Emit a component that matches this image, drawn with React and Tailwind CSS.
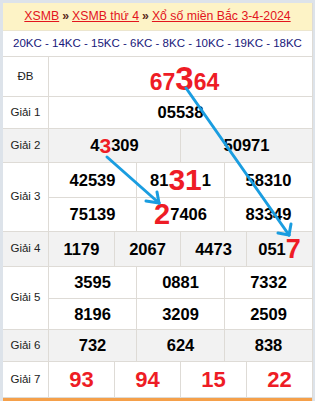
import React from 'react';

const font = { fontFamily: '"Liberation Sans", Arial, sans-serif' };

function Num({ children }) {
  return <span className="text-[16.5px] font-bold text-black leading-none">{children}</span>;
}

function Red({ size, children }) {
  return <span className={`font-bold text-[#ee1c25] leading-none ${size}`}>{children}</span>;
}

function Cell({ children, last, className = '' }) {
  return (
    <div className={`flex-1 flex items-center justify-center ${last ? '' : 'border-r border-[#dedbd6]'} ${className}`}>
      {children}
    </div>
  );
}

function Row({ label, height, bg = 'bg-white', children }) {
  return (
    <div className={`flex border-b border-[#dedbd6] ${bg} ${height}`}>
      <div className="w-[46px] shrink-0 flex items-center justify-center border-r border-[#dedbd6] text-[11.5px] text-[#222]">
        {label}
      </div>
      <div className="flex-1 flex flex-col">{children}</div>
    </div>
  );
}

export default function App() {
  return (
    <div className="relative w-[315px] h-[401px] overflow-hidden bg-[#dde3ea] pt-[3px] pl-[3px] pr-[2px]" style={font}>
      <div className="bg-white border-r border-[#dedbd6] h-full flex flex-col">
        {/* Header */}
        <div className="h-[28px] bg-[#fdf3c6] flex items-center justify-center text-[12.3px] border-b border-[#ece6cf]">
          <a className="text-[#e3141d] underline">XSMB</a>
          <span className="mx-[3px] text-[#5a2a1a] font-bold">»</span>
          <a className="text-[#e3141d] underline">XSMB thứ 4</a>
          <span className="mx-[3px] text-[#5a2a1a] font-bold">»</span>
          <a className="text-[#e3141d] underline">Xổ số miền Bắc 3-4-2024</a>
        </div>
        <div className="h-[26px] flex items-center justify-center text-[11.5px] text-[#17177a] border-b border-[#dedbd6]">
          20KC - 14KC - 15KC - 6KC - 8KC - 10KC - 19KC - 18KC
        </div>

        <Row label="ĐB" height="h-[40px]">
          <div className="flex-1 flex items-center justify-center pl-[8px] pt-[4px]">
            <span className="font-bold text-[#ee1c25] text-[23px] leading-none">
              67<span className="text-[33px]">3</span>64
            </span>
          </div>
        </Row>

        <Row label="Giải 1" height="h-[32px]">
          <Cell last><Num>05538</Num></Cell>
        </Row>

        <Row label="Giải 2" height="h-[34px]" bg="bg-[#f2f2f2]">
          <div className="flex-1 flex">
            <Cell>
              <Num>4</Num><Red size="text-[21px]">3</Red><Num>309</Num>
            </Cell>
            <Cell last><Num>50971</Num></Cell>
          </div>
        </Row>

        <Row label="Giải 3" height="h-[69px]">
          <div className="flex-1 flex border-b border-[#dedbd6]">
            <Cell><Num>42539</Num></Cell>
            <Cell>
              <Num>81</Num><Red size="text-[30px]">31</Red><Num>1</Num>
            </Cell>
            <Cell last><Num>58310</Num></Cell>
          </div>
          <div className="flex-1 flex">
            <Cell><Num>75139</Num></Cell>
            <Cell>
              <Red size="text-[29px]">2</Red><Num>7406</Num>
            </Cell>
            <Cell last><Num>83349</Num></Cell>
          </div>
        </Row>

        <Row label="Giải 4" height="h-[35px]" bg="bg-[#f2f2f2]">
          <div className="flex-1 flex">
            <Cell><Num>1179</Num></Cell>
            <Cell><Num>2067</Num></Cell>
            <Cell><Num>4473</Num></Cell>
            <Cell last>
              <Num>051</Num><Red size="text-[27px]">7</Red>
            </Cell>
          </div>
        </Row>

        <Row label="Giải 5" height="h-[63px]">
          <div className="flex-1 flex border-b border-[#dedbd6]">
            <Cell><Num>3595</Num></Cell>
            <Cell><Num>0881</Num></Cell>
            <Cell last><Num>7332</Num></Cell>
          </div>
          <div className="flex-1 flex">
            <Cell><Num>8196</Num></Cell>
            <Cell><Num>3209</Num></Cell>
            <Cell last><Num>2509</Num></Cell>
          </div>
        </Row>

        <Row label="Giải 6" height="h-[32px]" bg="bg-[#f2f2f2]">
          <div className="flex-1 flex">
            <Cell><Num>732</Num></Cell>
            <Cell><Num>624</Num></Cell>
            <Cell last><Num>838</Num></Cell>
          </div>
        </Row>

        <Row label="Giải 7" height="h-[36px]">
          <div className="flex-1 flex">
            <Cell><Red size="text-[22px]">93</Red></Cell>
            <Cell><Red size="text-[22px]">94</Red></Cell>
            <Cell><Red size="text-[22px]">15</Red></Cell>
            <Cell last><Red size="text-[22px]">22</Red></Cell>
          </div>
        </Row>

        <div className="flex-1 bg-[#f5a04a]" />
      </div>

      {/* arrows */}
      <svg className="absolute inset-0 pointer-events-none" width="315" height="401">
        <g stroke="#1a9de0" strokeWidth="3" strokeLinecap="round" fill="none">
          <line x1="186" y1="88" x2="289" y2="235" />
          <line x1="289" y1="235" x2="278" y2="233" />
          <line x1="289" y1="235" x2="291" y2="224" />
          <line x1="107" y1="157" x2="159" y2="203" />
          <line x1="159" y1="203" x2="146" y2="201" />
          <line x1="159" y1="203" x2="157" y2="192" />
        </g>
      </svg>
    </div>
  );
}
